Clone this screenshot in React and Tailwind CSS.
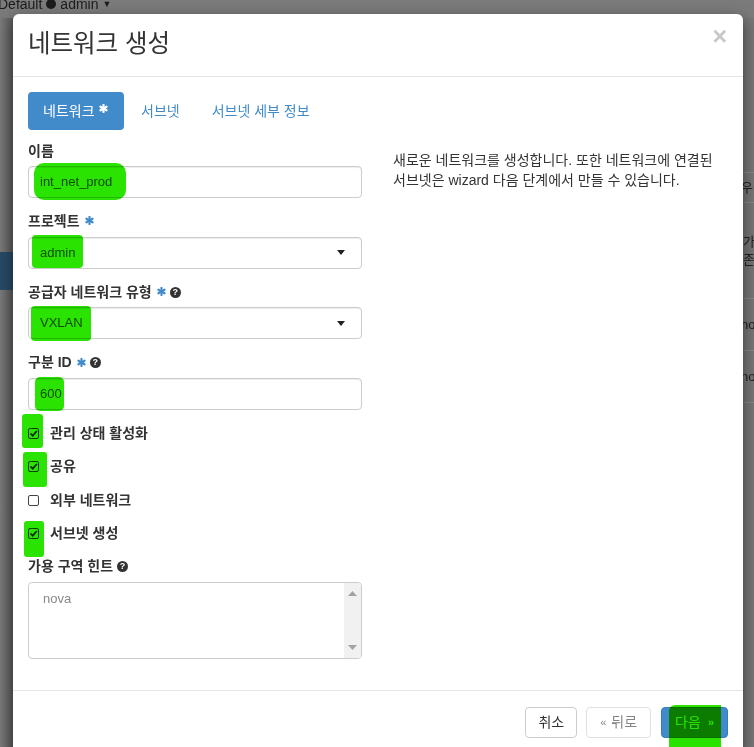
import { useState } from "react";

const FONT = "font-['Liberation_Sans','Noto_Sans_CJK_KR',sans-serif]";

const Asterisk = ({ color = "#428bca", size = 9 }) => (
    <svg width={size} height={size} viewBox="0 0 10 10" className="inline-block">
        <g stroke={color} strokeWidth="2.4" strokeLinecap="round">
            <line x1="5" y1="1" x2="5" y2="9" />
            <line x1="1.6" y1="3" x2="8.4" y2="7" />
            <line x1="1.6" y1="7" x2="8.4" y2="3" />
        </g>
    </svg>
);

const Help = () => (
    <span className="inline-flex w-[11px] h-[11px] rounded-full bg-[#333] text-white text-[9px] font-bold leading-none items-center justify-center">
        ?
    </span>
);

const Check = ({ checked }) => (
    <span className="w-[11px] h-[11px] border border-[#444] rounded-[2px] bg-white flex items-center justify-center">
        {checked && (
            <svg width="9" height="9" viewBox="0 0 9 9">
                <path d="M1.5 4.5 L3.7 6.7 L7.8 2" fill="none" stroke="#222" strokeWidth="1.7" />
            </svg>
        )}
    </span>
);

const Field = ({ label, req, help, children }) => (
    <div className="mb-[13.6px]">
        <div className="h-[20px] mb-[5px] flex items-center gap-[4px] text-[14px] font-bold text-[#333]">
            <span>{label}</span>
            {req && <span className="mb-[3px] ml-[1px]"><Asterisk /></span>}
            {help && <Help />}
        </div>
        {children}
    </div>
);

const Input = ({ value, select }) => (
    <div className="h-[32px] border border-[#ccc] rounded-[4px] bg-white pl-[11px] pr-[16px] flex items-center justify-between text-[13px] text-[#555] shadow-[inset_0_1px_1px_rgba(0,0,0,0.075)]">
        <span>{value}</span>
        {select && (
            <svg width="8" height="5" viewBox="0 0 8 5">
                <path d="M0 0 L8 0 L4 5 Z" fill="#222" />
            </svg>
        )}
    </div>
);

const Mark = ({ className }) => (
    <div className={"absolute bg-[#2ae300] mix-blend-multiply " + className}></div>
);

const App = () => {
    const [checks] = useState([
        { label: "관리 상태 활성화", on: true },
        { label: "공유", on: true },
        { label: "외부 네트워크", on: false },
        { label: "서브넷 생성", on: true },
    ]);

    return (
        <div className={"relative w-[754px] h-[747px] overflow-hidden bg-[#767676] flex flex-col " + FONT}>
            {/* page behind the backdrop */}
            <div className="h-[18px] shrink-0 bg-[#7b7b7b] flex items-end pb-[7px] text-[14px] text-[#1c1c1c] leading-none">
                <div className="flex items-center gap-[4px] -ml-[2px]">
                    Default <span className="w-[10px] h-[10px] rounded-full bg-[#1c1c1c] inline-block"></span> admin
                    <span className="text-[9px]">▼</span>
                </div>
            </div>
            <div className="flex-1 flex">
                <div className="w-[13px] flex flex-col bg-gradient-to-r from-[#7a7a7a] to-[#5c5c5c]">
                    <div className="h-[234px]"></div>
                    <div className="h-[38px] bg-[#284a66]"></div>
                </div>
                <div className="flex-1"></div>
                <div className="w-[11px] flex flex-col text-[13px] text-[#222] leading-[18px] overflow-hidden whitespace-nowrap">
                    <div className="h-[154px]"></div>
                    <div className="h-[30px] border-t border-[#868686] flex items-center -ml-[2px]">우</div>
                    <div className="h-[96px] border-t border-[#868686] flex items-center">
                        <div>가<br />존</div>
                    </div>
                    <div className="h-[52px] border-t border-[#868686] flex items-center -ml-[2px]">no</div>
                    <div className="h-[52px] border-t border-[#868686] flex items-center -ml-[2px]">no</div>
                    <div className="border-t border-[#868686]"></div>
                </div>
            </div>

            {/* modal */}
            <div className="absolute left-[13px] top-[14px] w-[730px] bg-white rounded-t-[6px] shadow-[0_5px_15px_rgba(0,0,0,0.5)]">
                <div className="h-[63px] border-b border-[#e5e5e5] pl-[15px] pr-[16px] flex justify-between">
                    <h4 className="text-[24.5px] text-[#333] mt-[14px] leading-[32px]">네트워크 생성</h4>
                    <span className="text-[25px] font-bold text-[#c8c8c8] leading-none mt-[10px]">×</span>
                </div>

                <div className="px-[15px] pt-[15px] pb-[31px]">
                    <div className="flex text-[14px]">
                        <div className="h-[38px] w-[96px] rounded-[4px] bg-[#428bca] text-white pl-[15px] flex items-center gap-[4px]">
                            네트워크 <span className="mb-[6px]"><Asterisk color="#fff" size={9} /></span>
                        </div>
                        <div className="h-[38px] px-[15px] ml-[2px] flex items-center text-[#428bca]">서브넷</div>
                        <div className="h-[38px] px-[15px] ml-[2px] flex items-center text-[#428bca]">서브넷 세부 정보</div>
                    </div>

                    <div className="flex gap-[31px] mt-[11px]">
                        <div className="w-[334px]">
                            <Field label="이름">
                                <Input value="int_net_prod" />
                            </Field>
                            <Field label="프로젝트" req>
                                <Input value="admin" select />
                            </Field>
                            <Field label="공급자 네트워크 유형" req help>
                                <Input value="VXLAN" select />
                            </Field>
                            <Field label="구분 ID" req help>
                                <Input value="600" />
                            </Field>

                            <div className="flex flex-col gap-[13.4px]">
                                {checks.map((c) => (
                                    <div key={c.label} className="h-[20px] flex items-center text-[14px] font-bold text-[#333]">
                                        <Check checked={c.on} />
                                        <span className="ml-[11px]">{c.label}</span>
                                    </div>
                                ))}
                            </div>

                            <div className="mt-[13px]">
                                <div className="h-[20px] mb-[5px] flex items-center gap-[4px] text-[14px] font-bold text-[#333]">
                                    가용 구역 힌트 <Help />
                                </div>
                                <div className="h-[77px] border border-[#ccc] rounded-[4px] bg-white flex">
                                    <div className="flex-1 text-[13px] text-[#888] pl-[14px] pt-[6px]">nova</div>
                                    <div className="w-[17px] bg-[#f1f1f1] rounded-r-[3px] flex flex-col items-center justify-between py-[8px]">
                                        <svg width="9" height="5" viewBox="0 0 9 5">
                                            <path d="M0 5 L9 5 L4.5 0 Z" fill="#a3a3a3" />
                                        </svg>
                                        <svg width="9" height="5" viewBox="0 0 9 5">
                                            <path d="M0 0 L9 0 L4.5 5 Z" fill="#a3a3a3" />
                                        </svg>
                                    </div>
                                </div>
                            </div>
                        </div>

                        <div className="flex-1 mt-[9px] text-[14px] leading-[20px] text-[#333] pr-[15px]">
                            새로운 네트워크를 생성합니다. 또한 네트워크에 연결된 서브넷은 wizard 다음 단계에서 만들 수 있습니다.
                        </div>
                    </div>
                </div>

                <div className="border-t border-[#e5e5e5] pl-[15px] pr-[15px] pt-[16px] pb-[15px] flex justify-end text-[14px]">
                    <button className="h-[31px] px-[12px] border border-[#ccc] rounded-[4px] bg-white text-[#333]">취소</button>
                    <button className="h-[31px] px-[13px] ml-[9px] border border-[#ccc] rounded-[4px] bg-white text-[#333] opacity-60 flex items-center gap-[5px]">
                        <span className="text-[11px]">«</span> 뒤로
                    </button>
                    <button className="h-[31px] px-[13px] ml-[10px] border border-[#357ebd] rounded-[4px] bg-[#428bca] text-white flex items-center gap-[7px]">
                        다음 <span className="text-[11px] font-bold">»</span>
                    </button>
                </div>
            </div>

            {/* marker highlights */}
            <Mark className="left-[34px] top-[163px] w-[92px] h-[37px] rounded-[10px]" />
            <Mark className="left-[32px] top-[235px] w-[51px] h-[33px] rounded-[4px]" />
            <Mark className="left-[31px] top-[306px] w-[60px] h-[35px] rounded-[4px]" />
            <Mark className="left-[35px] top-[377px] w-[29px] h-[34px] rounded-[5px]" />
            <Mark className="left-[22px] top-[414px] w-[21px] h-[34px] rounded-[3px]" />
            <Mark className="left-[23px] top-[452px] w-[24px] h-[35px] rounded-[3px]" />
            <Mark className="left-[24px] top-[521px] w-[20px] h-[36px] rounded-[3px]" />
            <Mark className="left-[669px] top-[705px] w-[52px] h-[42px] rounded-tl-[6px]" />
        </div>
    );
};

export default App;
